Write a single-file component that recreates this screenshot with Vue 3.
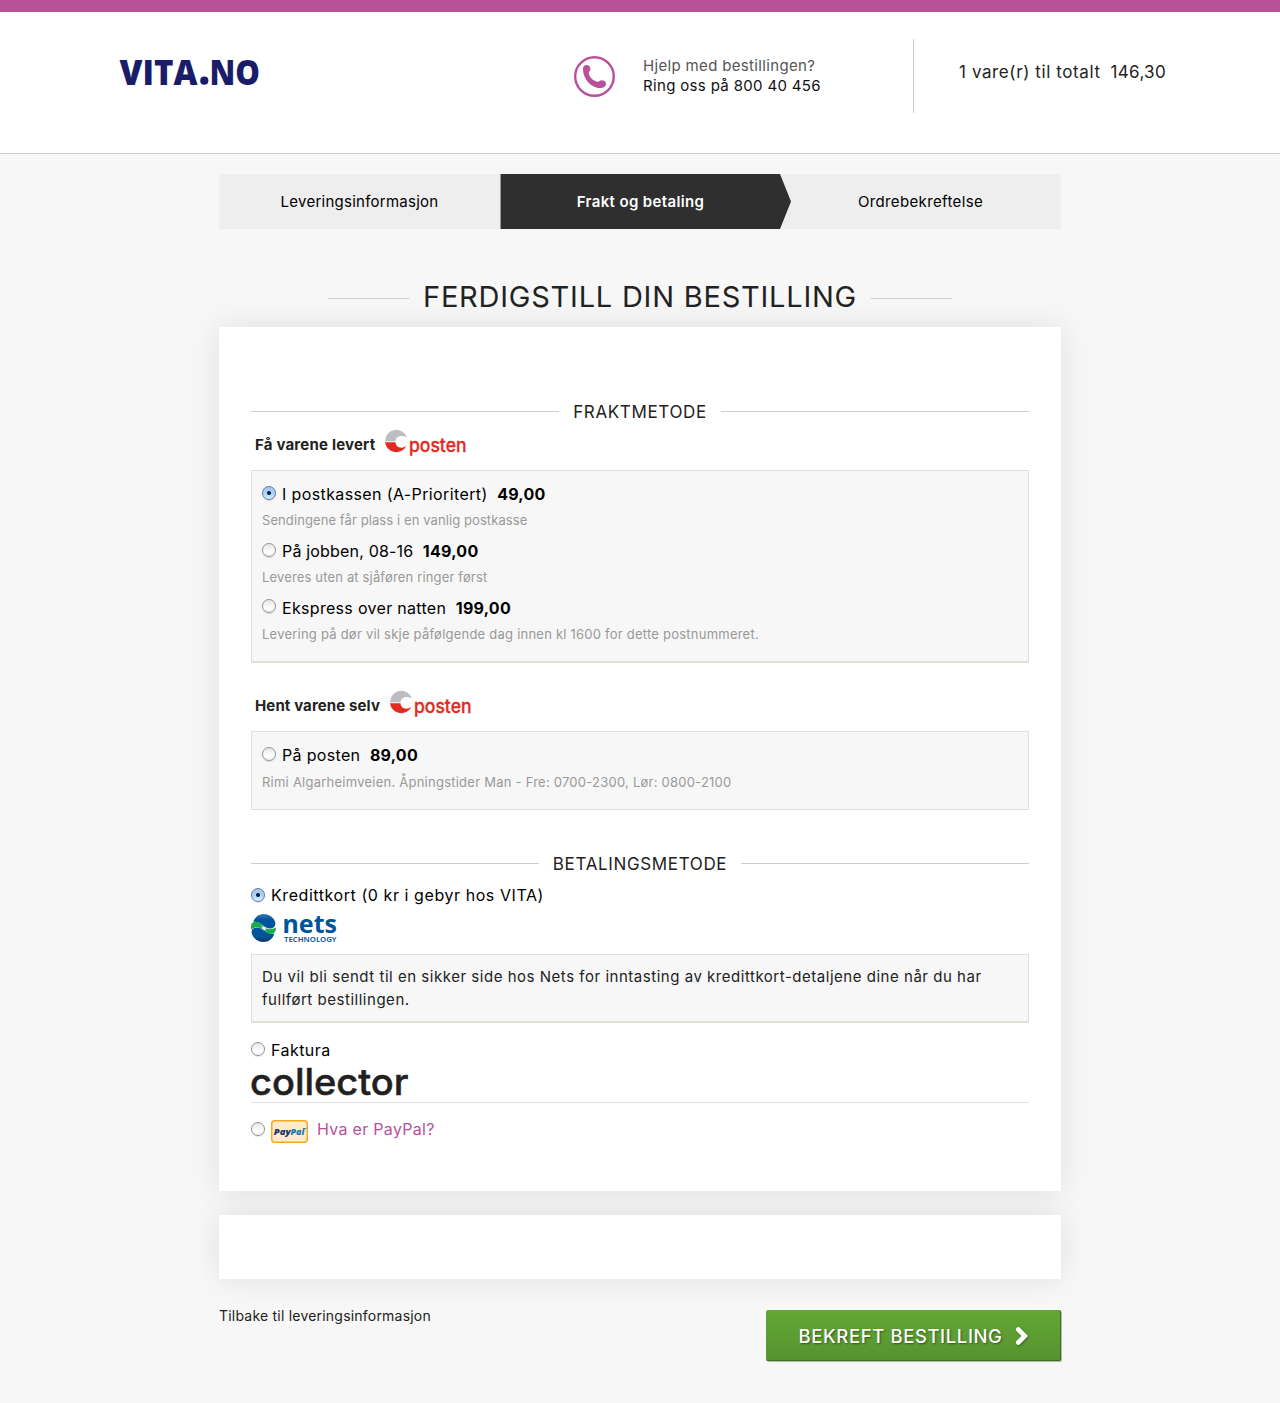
<script setup>
const delivery = [
  {
    title: 'Få varene levert',
    cls: 'home',
    options: [
      { name: 'I postkassen (A-Prioritert)', price: '49,00', note: 'Sendingene får plass i en vanlig postkasse', on: true, track: 0.38, noteTrack: 0.09 },
      { name: 'På jobben, 08-16', price: '149,00', note: 'Leveres uten at sjåføren ringer først', track: 0.18, noteTrack: 0.16 },
      { name: 'Ekspress over natten', price: '199,00', note: 'Levering på dør vil skje påfølgende dag innen kl 1600 for dette postnummeret.', track: 0.31, noteTrack: 0.23 },
    ],
  },
  {
    title: 'Hent varene selv',
    cls: 'pickup',
    options: [
      { name: 'På posten', price: '89,00', note: 'Rimi Algarheimveien. Åpningstider Man - Fre: 0700-2300, Lør: 0800-2100', track: 0.33, noteTrack: 0.24 },
    ],
  },
]
</script>

<template>
  <div class="page">
    <header class="top">
      <svg class="logo" width="150" height="40" viewBox="0 0 150 40">
        <text x=".5" y="32.500" textLength="78" lengthAdjust="spacingAndGlyphs" class="vita">VITA</text>
        <circle cx="85.300" cy="28.700" r="4.100" fill="#191d69" />
        <text x="90.500" y="32.500" textLength="50.500" lengthAdjust="spacingAndGlyphs" class="vita">NO</text>
      </svg>
      <svg class="phone" width="42" height="42" viewBox="0 0 42 42">
        <circle cx="20.500" cy="20.500" r="19.300" fill="none" stroke="#b8519a" stroke-width="2.400" />
        <path d="M9 13C9 10.500 10.500 9 12.700 9c2.300 0 3.700 1.700 3.700 4 0 2-1.900 2.600-1.600 4.300.6 4 4.600 7.600 8.400 8.400 1.800.4 2.500-1.400 4.500-1.400 2.500 0 4.300 1.400 4.300 3.400 0 2.700-2.400 4.300-6.500 4.300C17.500 32 9 23 9 13Z" fill="#b8519a" />
      </svg>
      <div class="help">
        <div class="q">Hjelp med bestillingen?</div>
        <div class="n">Ring oss på 800 40 456</div>
      </div>
      <div class="cart"><span class="count">1 vare(r) til totalt</span><span class="sum">146,30</span></div>
    </header>

    <main class="wrap">
      <nav class="steps">
        <div class="step s1"><span>Leveringsinformasjon</span></div>
        <div class="step active"><span>Frakt og betaling</span></div>
        <div class="step s3"><span>Ordrebekreftelse</span></div>
      </nav>

      <h1><i></i><span>FERDIGSTILL DIN BESTILLING</span><i></i></h1>

      <section class="card main">
        <h2 class="frakt"><i></i><span>FRAKTMETODE</span><i></i></h2>

        <div v-for="g in delivery" :key="g.title" class="group" :class="g.cls">
          <div class="gtitle">
            <strong>{{ g.title }}</strong>
            <svg width="82" height="26" viewBox="0 0 82 26">
              <path d="M0 11.300A11.300 11.300 0 0 1 22 7.500C17 4.500 11 6 10.500 11.300Z" fill="#bcbdc2" />
              <path d="M0 12.300H10.500C11 18 17 19.500 21.500 15.500A11.300 11.300 0 0 1 0 12.300Z" fill="#e32a22" />
              <text x="24" y="21.500" textLength="57.500" lengthAdjust="spacingAndGlyphs" class="posten">posten</text>
            </svg>
          </div>
          <div class="box">
            <div v-for="o in g.options" :key="o.name" class="option">
              <label class="row"><b class="radio" :class="{ on: o.on }"></b><span class="name" :style="{ letterSpacing: o.track + 'px' }">{{ o.name }}</span><span class="price">{{ o.price }}</span></label>
              <p class="note" :style="{ letterSpacing: o.noteTrack + 'px' }">{{ o.note }}</p>
            </div>
          </div>
        </div>

        <h2 class="betal"><i></i><span>BETALINGSMETODE</span><i></i></h2>

        <label class="row card-row"><b class="radio on"></b><span class="name">Kredittkort (0 kr i gebyr hos VITA)</span></label>
        <svg class="nets" width="87" height="29" viewBox="0 0 87 29">
          <defs>
            <linearGradient id="ng" x1="0" y1="0" x2="0" y2="1">
              <stop offset="0" stop-color="#3c78ae" /><stop offset=".4" stop-color="#00549b" /><stop offset="1" stop-color="#00549b" />
            </linearGradient>
            <linearGradient id="nb" x1="0" y1="0" x2="0" y2="1">
              <stop offset="0" stop-color="#00549b" /><stop offset=".6" stop-color="#00549b" /><stop offset="1" stop-color="#17365f" />
            </linearGradient>
          </defs>
          <path d="M2 8C4 3 7.500 0 12.500 0S22.500 3 24 7.500c2 6-4 8.500-9 6C10 10.500 7 7 2 8Z" fill="url(#ng)" />
          <path d="M23.500 19.500C21.500 25 18 28 12.500 28S3 25 1 20c-2-6 4-8 9-5.500C15 18 18 20.500 23.500 19.500Z" fill="url(#nb)" />
          <path d="M.6 9.500C4 6.500 8.500 8 11 11 13.500 14.500 18 17 25 13.500 25.300 20 20 21.500 15 18 11 14.500 6 11 0 15.500-.2 13 0 11 .6 9.500Z" fill="#1aab4b" />
          <path d="M10.500 12.500 14.500 13.800 15 16.500 11.500 15.200Z" fill="#fff" />
          <text x="31.500" y="19" textLength="54.500" lengthAdjust="spacingAndGlyphs" class="netst">nets</text>
          <text x="33" y="27.600" textLength="52.500" lengthAdjust="spacingAndGlyphs" class="tech">TECHNOLOGY</text>
        </svg>
        <div class="box info">Du vil bli sendt til en sikker side hos Nets for inntasting av kredittkort-detaljene dine når du har<br>fullført bestillingen.</div>

        <label class="row invoice"><b class="radio"></b><span class="name">Faktura</span></label>
        <svg class="collector" width="160" height="29" viewBox="0 0 160 29">
          <text x="-1" y="27" textLength="158.500" lengthAdjust="spacingAndGlyphs" class="coll">collector</text>
        </svg>
        <div class="rule"></div>

        <label class="row paypal"><b class="radio"></b>
          <svg width="37" height="23" viewBox="0 0 37 23">
            <rect x=".75" y=".75" width="35.500" height="21.500" rx="3" fill="#ffebc8" stroke="#f6a81f" stroke-width="1.500" />
            <text x="2.800" y="14.500" textLength="17" lengthAdjust="spacingAndGlyphs" class="pp" fill="#1b3768">Pay</text>
            <text x="19.500" y="14.500" textLength="14" lengthAdjust="spacingAndGlyphs" class="pp" fill="#2077b0">Pal</text>
            <path d="M33.500 8.500h2" stroke="#2077b0" stroke-width=".8" />
          </svg>
          <a>Hva er PayPal?</a></label>
      </section>

      <section class="card empty"></section>

      <footer class="foot">
        <a class="back">Tilbake til leveringsinformasjon</a>
        <button class="go"><span>BEKREFT BESTILLING</span>
          <svg width="14" height="20" viewBox="0 0 14 20"><path d="M3.300 3.500 9.800 10 3.300 16.500" fill="none" stroke="#fff" stroke-width="4.600" stroke-linecap="round" /></svg>
        </button>
      </footer>
    </main>
  </div>
</template>

<style>
body { background: #f7f7f7; }
</style>

<style scoped>
.page { height: 1403px; overflow: hidden; background: #f7f7f7; font-family: Inter, "Liberation Sans", sans-serif; color: #222; }
svg { display: block; flex: none; overflow: visible; }
span, strong, a { white-space: nowrap; }
.top { box-sizing: border-box; height: 154px; border-top: 12px solid #b8519a; border-bottom: 1px solid #ccc; background: #fff; display: flex; align-items: flex-start; }
.logo { margin: 40px 0 0 119px; }
.vita { font: 800 34.500px "Open Sans", sans-serif; fill: #191d69; }
.phone { margin: 44px 0 0 305px; }
.help { flex: none; margin: 44px 0 0 27px; width: 240px; font-size: 15px; line-height: 20px; letter-spacing: .34px; }
.q { color: #555; }
.n { color: #111; }
.cart { flex: none; box-sizing: border-box; margin: 27px 0 0 30px; height: 74px; border-left: 1px solid #ccc; padding-left: 45px; line-height: 67px; font-size: 17px; display: flex; gap: 10px; }
.count { letter-spacing: .6px; }
.sum { letter-spacing: .3px; }
.wrap { width: 842px; margin: 20px auto 0; }
.steps { display: flex; height: 55px; background: #eee; font-size: 15px; line-height: 55px; color: #000; text-align: center; letter-spacing: .36px; }
.step { width: 281px; }
.s1 { letter-spacing: .25px; }
.active { position: relative; width: 280px; background: #2f2f2f; color: #fff; font-weight: 600; border-left: 1px solid #999; box-sizing: border-box; }
.active::after { content: ""; position: absolute; left: 100%; top: 0; width: 11px; height: 55px; background: #2f2f2f; clip-path: polygon(0 0, 100% 50%, 0 100%); }
h1, h2 { margin: 0; display: flex; align-items: center; justify-content: center; font-weight: 400; }
h1 { margin-top: 47px; height: 40px; font-size: 29px; gap: 14px; letter-spacing: .77px; }
h1 i { width: 81px; height: 1px; background: #ccc; margin-top: 4px; }
.card { background: #fff; box-shadow: 0 0 30px rgba(0, 0, 0, .1); }
.main { box-sizing: border-box; height: 864px; margin-top: 11px; padding: 72px 32px 0; }
h2 { height: 24px; font-size: 17px; gap: 14px; letter-spacing: .64px; }
h2 span { padding-top: 1px; }
h2 i { flex: 1; height: 1px; background: #ccc; }
.gtitle { display: flex; height: 43px; align-items: center; padding-left: 4px; gap: 10px; margin-bottom: 4px; font-size: 15px; letter-spacing: .2px; }
.pickup .gtitle { letter-spacing: .12px; }
.gtitle svg { margin-top: -4px; letter-spacing: 0; }
.posten { font: 500 19px Inter, sans-serif; fill: #e32a22; stroke: #e32a22; stroke-width: .3; }
.box { box-sizing: border-box; border: 1px solid #e2dfd6; background: #f7f7f7; padding: 11px 10px 0; }
.home .box { height: 193px; border-bottom-width: 2px; }
.pickup { margin-top: 21px; }
.pickup .box { height: 79px; }
.pickup .note { padding-top: 1px; }
.option { height: 57px; }
.row { display: flex; align-items: center; height: 24px; font-size: 16px; color: #000; }
.radio { box-sizing: border-box; width: 14px; height: 14px; flex: none; border-radius: 50%; border: 1px solid #949494; margin-right: 6px; background: linear-gradient(#e6e6e6, #fff 70%, #f1f1f1); box-shadow: 0 1px 1px rgba(0, 0, 0, .12); }
.option .radio { margin-top: -3px; }
.option:nth-child(3) .radio { margin-top: -4px; }
.radio.on { border-color: #6476a5; background: radial-gradient(circle, #10203d 0 1.500px, transparent 2.400px), linear-gradient(#a8c4ee, #a8d2fa 50%, #d4f2ff); }
.price { font-weight: 700; margin-left: 9.500px; letter-spacing: .25px; }
.note { margin: 4px 0 0; line-height: 20px; font-size: 13px; color: #999; white-space: nowrap; }
.betal { margin-top: 41px; }
.card-row { margin-top: 8px; letter-spacing: .57px; }
.nets { margin-top: 7px; }
.netst { font: 700 25.500px "Noto Sans", sans-serif; fill: #00549b; }
.tech { font: 600 6.200px "Noto Sans", sans-serif; fill: #00549b; }
.info { margin-top: 11px; height: 69px; padding-top: 10px; line-height: 23px; font-size: 15px; letter-spacing: .525px; white-space: nowrap; border-bottom-width: 2px; }
.invoice { margin-top: 15px; letter-spacing: .45px; }
.invoice .radio, .paypal .radio { margin-top: -2px; }
.collector { margin-top: 6px; }
.coll { font: 500 37px Inter, sans-serif; fill: #231f20; stroke: #231f20; stroke-width: .5; }
.rule { height: 1px; background: #e2dfd6; margin-top: 5px; }
.paypal { margin-top: 15px; }
.paypal svg { margin-top: 2px; }
.pp { font: italic 800 9px "Open Sans", sans-serif; }
.paypal a { color: #b8519a; margin: -2px 0 0 9px; letter-spacing: .3px; }
.empty { height: 64px; margin-top: 24px; }
.foot { display: flex; justify-content: space-between; margin-top: 31px; align-items: flex-start; }
.back { font-size: 14px; line-height: 11px; letter-spacing: .21px; }
.go { box-sizing: border-box; width: 295px; height: 51px; border: 0; border-radius: 2px; padding: 0 0 0 32.500px; background: linear-gradient(#62a834, #579230); box-shadow: inset -1px -1px 0 #3d721d, 1px 1px 0 #b5b8b3; color: #fff; display: flex; align-items: center; font: 500 18.500px Inter, sans-serif; letter-spacing: .6px; text-shadow: 1px 1px 2px rgba(0, 0, 0, .45); }
.go svg { margin: 1px 0 0 12.500px; filter: drop-shadow(1px 1px 1px rgba(0, 0, 0, .35)); }
</style>
